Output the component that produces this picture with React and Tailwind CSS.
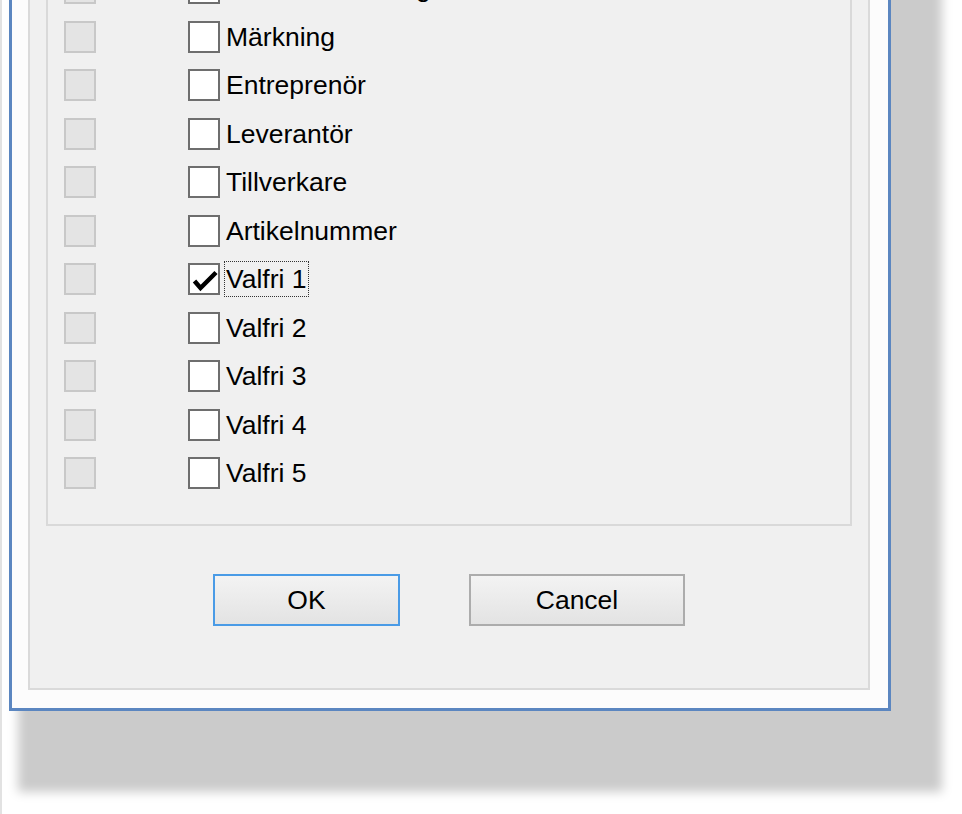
const FIELDS = [
  { label: "Artikelbenämning" },
  { label: "Märkning" },
  { label: "Entreprenör" },
  { label: "Leverantör" },
  { label: "Tillverkare" },
  { label: "Artikelnummer" },
  { label: "Valfri 1", checked: true, focused: true },
  { label: "Valfri 2" },
  { label: "Valfri 3" },
  { label: "Valfri 4" },
  { label: "Valfri 5" },
];

function Check() {
  return (
    <svg width="28" height="28" viewBox="0 0 28 28" className="block">
      <polyline points="4.5,16 10.5,23 26,7.5" fill="none" stroke="#000" strokeWidth="4.5" strokeLinejoin="miter" />
    </svg>
  );
}

function FieldRow({ label, checked, focused }) {
  return (
    <div className="h-[48.5px] flex items-center">
      <div className="w-[32px] h-[32px] bg-[#e4e4e4] border-2 border-[#c8c8c8]" />
      <div className="ml-[92px] w-[32px] h-[32px] bg-white border-2 border-[#6e6e6e] flex items-center justify-center">
        {checked && <Check />}
      </div>
      <span
        className={`ml-[4px] h-[36px] px-[1px] flex items-center border ${focused ? "border-dotted border-[#333]" : "border-transparent"}`}
      >
        {label}
      </span>
    </div>
  );
}

export default function App() {
  return (
    <div
      className="relative w-[962px] h-[814px] overflow-hidden bg-white border-l-2 border-[#e2e2e2] text-black text-[26.5px] leading-none"
      style={{ fontFamily: '"Liberation Sans", Arial, sans-serif' }}
    >
      <div className="-mt-[75px] ml-[7px] w-[882px] border-[3px] border-[#5b86c0] bg-[#fcfcfc] pt-[16px] pl-[16px] pr-[18px] pb-[18px] shadow-[30px_60px_10px_21px_#cbcbcb]">
        <div className="border-2 border-[#dadada] bg-[#f0f0f0] px-[16px] pt-[16px]">
          <div className="border-2 border-[#d9d9d9] pl-[16px] pb-[26.5px]">
            {FIELDS.map((f) => (
              <FieldRow key={f.label} {...f} />
            ))}
          </div>
          <div className="flex justify-center gap-[69px] mt-[48px] mb-[62px]">
            <button className="w-[187px] h-[52px] border-2 border-[#4a9be6] bg-gradient-to-b from-[#f3f3f3] to-[#e3e3e3] flex items-center justify-center">
              OK
            </button>
            <button className="w-[216px] h-[52px] border-2 border-[#acacac] bg-gradient-to-b from-[#f3f3f3] to-[#e3e3e3] flex items-center justify-center">
              Cancel
            </button>
          </div>
        </div>
      </div>
    </div>
  );
}
